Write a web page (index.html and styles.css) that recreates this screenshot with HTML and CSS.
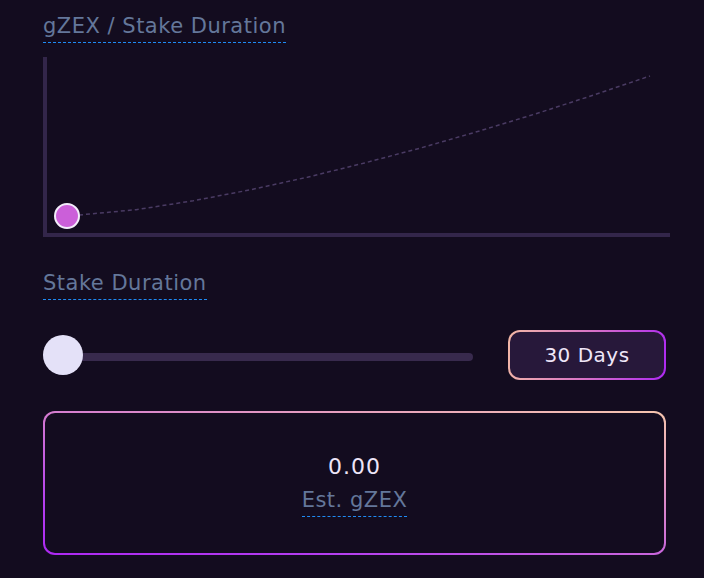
FILE: index.html
```html
<!DOCTYPE html>
<html lang="en">
<head>
    <meta charset="UTF-8">
    <meta name="viewport" content="width=device-width, initial-scale=1.0">
    <title>Stake gZEX</title>
    <link rel="stylesheet" href="styles.css">
</head>
<body>
    <div class="panel">
        <span class="label title">gZEX / Stake Duration</span>

        <div class="chart">
            <svg width="627" height="180" viewBox="0 0 627 180">
                <rect x="0" y="0" width="4" height="180" fill="#33264a"></rect>
                <rect x="0" y="176" width="627" height="4" fill="#33264a"></rect>
                <!-- estimated gZEX curve -->
                <polyline class="curve" points="36,158 93.1,152.7 150.2,143.8 207.3,132.8 264.4,120.2 321.5,106 378.6,90.7 435.7,74.2 492.8,56.8 549.9,38.3 607,19"></polyline>
                <circle cx="24" cy="159" r="12" fill="#cb5fd9" stroke="#f2ecfa" stroke-width="2"></circle>
            </svg>
        </div>

        <span class="label duration-label">Stake Duration</span>

        <div class="slider-row">
            <div class="slider">
                <div class="track"></div>
                <div class="thumb"></div>
            </div>
            <button class="days">30 Days</button>
        </div>

        <div class="result">
            <div class="amount">0.00</div>
            <span class="label est">Est. gZEX</span>
        </div>
    </div>
</body>
</html>
```

FILE: styles.css
```css
body {
    margin: 0;
    background: #130c1f;
    font-family: "DejaVu Sans", sans-serif;
}
.panel {
    width: 623px;
    padding: 14px 0 0 43px;
    display: flex;
    flex-direction: column;
    align-items: flex-start;
}
.label {
    display: inline-block;
    font-size: 21px;
    line-height: 24px;
    letter-spacing: 0.5px;
    color: #64779a;
    padding-bottom: 4px;
    border-bottom: 1px dashed #1f8bf5;
}
.chart {
    margin-top: 14px;
}
.chart svg {
    display: block;
}
.curve {
    fill: none;
    stroke: #4a3b63;
    stroke-width: 1.5;
    stroke-dasharray: 4 3;
}
.duration-label {
    margin-top: 34px;
}
.slider-row {
    margin-top: 30px;
    width: 623px;
    height: 50px;
    display: flex;
    align-items: center;
    justify-content: space-between;
}
.slider {
    position: relative;
    width: 430px;
    height: 40px;
    display: flex;
    align-items: center;
}
.track {
    width: 100%;
    height: 8px;
    margin-top: 3px;
    border-radius: 4px;
    background: #382a4d;
}
.thumb {
    position: absolute;
    left: 0;
    top: 0;
    width: 40px;
    height: 40px;
    border-radius: 50%;
    background: #e4e1f8;
}
.days {
    width: 158px;
    height: 50px;
    border: 2px solid transparent;
    border-radius: 12px;
    background: linear-gradient(#27183a, #27183a) padding-box,
                linear-gradient(100deg, #f3b9a6, #d873c6 50%, #ad28f2) border-box;
    color: #efe6f8;
    font-family: "DejaVu Sans", sans-serif;
    font-size: 20px;
    letter-spacing: 0.5px;
    cursor: pointer;
}
.result {
    margin-top: 31px;
    width: 623px;
    height: 144px;
    box-sizing: border-box;
    padding-top: 4px;
    border: 2px solid transparent;
    border-radius: 12px;
    background: linear-gradient(#130c1f, #130c1f) padding-box,
                linear-gradient(190deg, #f6c6ae, #e59cc0 25%, #b43ef0 80%, #ad28f2) border-box;
    display: flex;
    flex-direction: column;
    align-items: center;
    justify-content: center;
}
.amount {
    font-size: 22px;
    line-height: 28px;
    letter-spacing: 1px;
    color: #ede5f8;
    margin-bottom: 7px;
}
```
